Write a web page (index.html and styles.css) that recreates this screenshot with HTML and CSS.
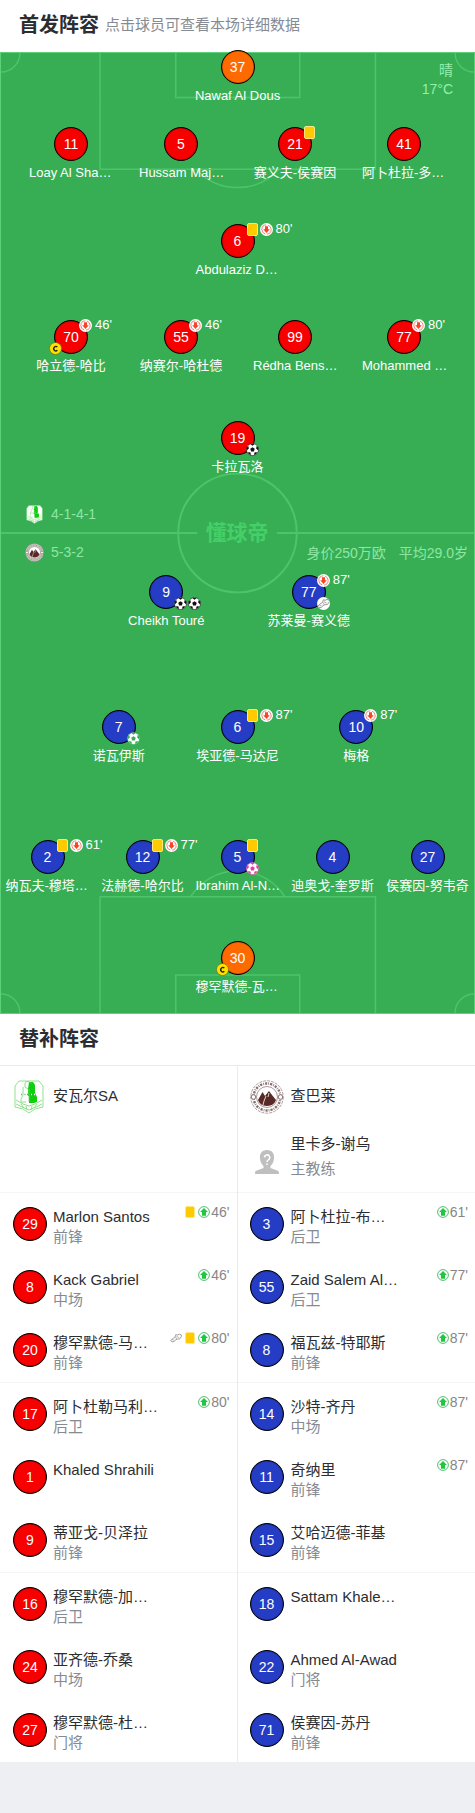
FILE: index.html
```html
<!DOCTYPE html>
<html lang="zh-CN">
<head>
<meta charset="utf-8">
<meta name="viewport" content="width=device-width, initial-scale=1">
<title>首发阵容</title>
<link rel="stylesheet" href="styles.css">
</head>
<body>
<svg class="defs" aria-hidden="true">
  <symbol id="out" viewBox="0 0 14 14">
    <circle cx="7" cy="7" r="7" fill="#fff"/>
    <circle cx="7" cy="7" r="5" fill="none" stroke="#f0564a" stroke-width=".8" stroke-dasharray="13.7 2" stroke-dashoffset="-9"/>
    <path d="M5.4 3.4h3.2v3.4h1.9L7 10.7 3.5 6.8h1.9z" fill="#fb4226"/>
  </symbol>
  <symbol id="in" viewBox="0 0 14 14">
    <circle cx="7" cy="7" r="6.3" fill="#fff" stroke="#2fb554" stroke-width="1"/>
    <path d="M7 2.400 11.600 7H9.400v4.500H4.600V7H2.400z" fill="#1fc741"/>
  </symbol>
  <symbol id="ball" viewBox="0 0 14 14">
    <circle cx="7" cy="7" r="6.5" fill="#fff" stroke="currentColor" stroke-width=".6"/>
    <path fill="currentColor" d="M7 4.6 9.4 6.3 8.5 9.1h-3L4.6 6.3zM4.6 1.1h4.8L7 2.9zM.7 5 2.5 3.2 3.1 5.8.8 8zM13.3 5 11.5 3.2l-.6 2.6L13.2 8zM2.3 9.6l2.5.6.6 2.7-2.6-1.2zM11.7 9.6l-2.5.6-.6 2.7 2.6-1.2z"/>
  </symbol>
  <symbol id="boot" viewBox="0 0 14 14">
    <path d="M.8 10.400 2.500 8.200 6 5.600 6.800 3l2 .5 2-1 2.400.8.300 1.700-2.300 3.200-2.700.1-2.200 1-1.300 1.800-2.800.4z" fill="#f6f6f6" stroke="#8c8c8c" stroke-width=".9" stroke-linejoin="round"/>
    <path d="M6 5.600 8 8.100M7.500 5 10.200 6.500M2.500 8.500l2 1" fill="none" stroke="#8c8c8c" stroke-width=".7"/>
  </symbol>
  <symbol id="cap" viewBox="0 0 14 14">
    <circle cx="7" cy="7" r="6.5" fill="#ffe100" stroke="#6a6420" stroke-width=".7"/>
    <path d="M9 5.5A2.3 2.3 0 1 0 9 8.8" fill="none" stroke="#222" stroke-width="1.5"/>
  </symbol>
  <symbol id="crest-a" viewBox="0 0 34 34">
    <path d="M7 1h20l4 5v21l-8 2-6 4-6-4-8-2V6z" fill="#fff" stroke="#74da74" stroke-width=".8"/>
    <path d="M17 2h4l2 3v8l2 4v5l-3 1h-5v-7h-1V9z" fill="#0fcd0f"/>
    <path d="M13 2.500c2-1.500 5-1 6.500 1M13 3v4l3 2M11 7v8l-2 4v3h5M17 9v13" fill="none" stroke="#6cd86c" stroke-width=".8"/>
    <path d="M4 20l7 4 6 2 6-2 7-4M4 24l6 3 7 3 7-3 6-3M9 24l3 4M25 24l-3 4M14 26l1 4M20 26l-1 4" fill="none" stroke="#7fdd7f" stroke-width=".9"/>
    <path d="M9 14.500h1M12.500 14.500h1M15 14.500h1" stroke="#43c943" stroke-width="1.500"/>
    <path d="M19 14.500h1M22 14.500h1" stroke="#fff" stroke-width="1.500"/>
  </symbol>
  <symbol id="crest-b" viewBox="0 0 34 34">
    <circle cx="17" cy="17" r="16.200" fill="var(--crest, #fff)" stroke="#9a8280" stroke-width=".8" stroke-dasharray="3 1"/>
    <circle cx="17" cy="17" r="13.500" fill="none" stroke="var(--crest-ring, #86706e)" stroke-width="2.400" stroke-dasharray="2.200 1.100 .8 1"/>
    <circle cx="17" cy="17" r="10.500" fill="#fff" stroke="#86706e" stroke-width=".7"/>
    <circle cx="3.500" cy="17" r="2.300" fill="#fff" stroke="#86706e"/>
    <circle cx="30.500" cy="17" r="2.300" fill="#fff" stroke="#86706e"/>
    <path d="M8 20 12.500 12l2.500 4 4-5 3 4 4 5c-1 3-4 6-9 6s-8-3-9-6z" fill="#592a25"/>
    <path d="M16 16l-2 5-1 4M19 13l-1 4" stroke="#fff" stroke-width=".8" fill="none"/>
  </symbol>
</svg>

<header class="section-head">
  <h2>首发阵容</h2><span class="hint">点击球员可查看本场详细数据</span>
</header>

<main>
<section class="pitch" aria-label="首发阵容">
  <svg class="field" viewBox="0 0 475 962" preserveAspectRatio="none" aria-hidden="true">
    <g fill="none" stroke="#4cc56a" stroke-width="1.500">
      <path d="M99.500 0V116.500H376V0M175.500 0V44.500H300V0M196 116.500A56 56 0 0 0 279 116.500"/>
      <path d="M99.500 962V845.500H376V962M175.500 962V924H300V962M190.500 845.500A56 56 0 0 1 285 845.500"/>
      <path d="M19 0A19 19 0 0 1 0 19M456 0A19 19 0 0 0 475 19M0 943A19 19 0 0 1 19 962M475 943A19 19 0 0 0 456 962"/>
    </g>
    <g fill="none" stroke="#4cc56a" stroke-width="2">
      <circle cx="237.500" cy="481" r="59.500"/>
      <path d="M0 481H197M277 481H475"/>
    </g>
    <text class="brand" x="237" y="488" text-anchor="middle">懂球帝</text>
  </svg>
  <div class="weather"><span>晴</span><span>17°C</span></div>

  <div class="squad">
    <div class="line one">
      <a class="player keeper" href="#"><span class="shirt">37</span><span class="name">Nawaf Al Dous</span></a>
    </div>
    <div class="line four">
      <a class="player red" href="#"><span class="shirt">11</span><span class="name cut">Loay Al Sha…</span></a>
      <a class="player red" href="#"><span class="shirt">5</span><span class="name cut">Hussam Maj…</span></a>
      <a class="player red" href="#"><span class="shirt">21<span class="events"><i class="card"></i></span></span><span class="name">赛义夫-侯赛因</span></a>
      <a class="player red" href="#"><span class="shirt">41</span><span class="name cut">阿卜杜拉-多…</span></a>
    </div>
    <div class="line one">
      <a class="player red" href="#"><span class="shirt">6<span class="events"><i class="card"></i><svg><use href="#out"/></svg><span class="time">80'</span></span></span><span class="name cut">Abdulaziz D…</span></a>
    </div>
    <div class="line four">
      <a class="player red" href="#"><span class="shirt">70<span class="events"><svg><use href="#out"/></svg><span class="time">46'</span></span><span class="captain"><svg><use href="#cap"/></svg></span></span><span class="name">哈立德-哈比</span></a>
      <a class="player red" href="#"><span class="shirt">55<span class="events"><svg><use href="#out"/></svg><span class="time">46'</span></span></span><span class="name">纳赛尔-哈杜德</span></a>
      <a class="player red" href="#"><span class="shirt">99</span><span class="name cut">Rédha Bens…</span></a>
      <a class="player red" href="#"><span class="shirt">77<span class="events"><svg><use href="#out"/></svg><span class="time">80'</span></span></span><span class="name cut">Mohammed …</span></a>
    </div>
    <div class="line one">
      <a class="player red" href="#"><span class="shirt">19<span class="goals"><svg><use href="#ball"/></svg></span></span><span class="name">卡拉瓦洛</span></a>
    </div>

    <div class="formation"><svg><use href="#crest-a"/></svg><span>4-1-4-1</span></div>
    <div class="formation dim"><svg><use href="#crest-b"/></svg><span>5-3-2</span><span class="worth"><span>身价250万欧</span><span>平均29.0岁</span></span></div>

    <div class="line two">
      <a class="player blue" href="#"><span class="shirt">9<span class="goals"><svg><use href="#ball"/></svg><svg><use href="#ball"/></svg></span></span><span class="name">Cheikh Touré</span></a>
      <a class="player blue" href="#"><span class="shirt">77<span class="events"><svg><use href="#out"/></svg><span class="time">87'</span></span><span class="goals"><svg class="disc"><use href="#boot"/></svg></span></span><span class="name">苏莱曼-赛义德</span></a>
    </div>
    <div class="line three">
      <a class="player blue" href="#"><span class="shirt">7<span class="goals"><svg class="green"><use href="#ball"/></svg></span></span><span class="name">诺瓦伊斯</span></a>
      <a class="player blue" href="#"><span class="shirt">6<span class="events"><i class="card"></i><svg><use href="#out"/></svg><span class="time">87'</span></span></span><span class="name">埃亚德-马达尼</span></a>
      <a class="player blue" href="#"><span class="shirt">10<span class="events"><svg><use href="#out"/></svg><span class="time">87'</span></span></span><span class="name">梅格</span></a>
    </div>
    <div class="line five">
      <a class="player blue" href="#"><span class="shirt">2<span class="events"><i class="card"></i><svg><use href="#out"/></svg><span class="time">61'</span></span></span><span class="name cut">纳瓦夫-穆塔…</span></a>
      <a class="player blue" href="#"><span class="shirt">12<span class="events"><i class="card"></i><svg><use href="#out"/></svg><span class="time">77'</span></span></span><span class="name">法赫德-哈尔比</span></a>
      <a class="player blue" href="#"><span class="shirt">5<span class="events"><i class="card"></i></span><span class="goals"><svg class="pink"><use href="#ball"/></svg></span></span><span class="name cut">Ibrahim Al-N…</span></a>
      <a class="player blue" href="#"><span class="shirt">4</span><span class="name">迪奥戈-奎罗斯</span></a>
      <a class="player blue" href="#"><span class="shirt">27</span><span class="name">侯赛因-努韦奇</span></a>
    </div>
    <div class="line one">
      <a class="player keeper" href="#"><span class="shirt">30<span class="captain"><svg><use href="#cap"/></svg></span></span><span class="name cut">穆罕默德-瓦…</span></a>
    </div>
  </div>
</section>

<section class="bench">
  <header class="section-head"><h2>替补阵容</h2></header>
  <div class="teams">
    <div class="team">
      <div class="team-head">
        <div class="club"><svg><use href="#crest-a"/></svg><span>安瓦尔SA</span></div>
      </div>
      <div class="group">
        <a class="sub red" href="#"><span class="shirt">29</span><span class="who"><b>Marlon Santos</b><small>前锋</small></span><span class="log"><i class="card"></i><svg><use href="#in"/></svg>46'</span></a>
        <a class="sub red" href="#"><span class="shirt">8</span><span class="who"><b>Kack Gabriel</b><small>中场</small></span><span class="log"><svg><use href="#in"/></svg>46'</span></a>
        <a class="sub red" href="#"><span class="shirt">20</span><span class="who"><b>穆罕默德-马…</b><small>前锋</small></span><span class="log"><svg><use href="#boot"/></svg><i class="card"></i><svg><use href="#in"/></svg>80'</span></a>
      </div>
      <div class="group">
        <a class="sub red" href="#"><span class="shirt">17</span><span class="who"><b>阿卜杜勒马利…</b><small>后卫</small></span><span class="log"><svg><use href="#in"/></svg>80'</span></a>
        <a class="sub red" href="#"><span class="shirt">1</span><span class="who"><b>Khaled Shrahili</b></span></a>
        <a class="sub red" href="#"><span class="shirt">9</span><span class="who"><b>蒂亚戈-贝泽拉</b><small>前锋</small></span></a>
      </div>
      <div class="group">
        <a class="sub red" href="#"><span class="shirt">16</span><span class="who"><b>穆罕默德-加…</b><small>后卫</small></span></a>
        <a class="sub red" href="#"><span class="shirt">24</span><span class="who"><b>亚齐德-乔桑</b><small>中场</small></span></a>
        <a class="sub red" href="#"><span class="shirt">27</span><span class="who"><b>穆罕默德-杜…</b><small>门将</small></span></a>
      </div>
    </div>
    <div class="team">
      <div class="team-head">
        <div class="club"><svg><use href="#crest-b"/></svg><span>查巴莱</span></div>
        <div class="coach">
          <svg viewBox="0 0 34 34" aria-hidden="true"><path d="M17 5c5 0 7.500 3.500 7 8.500-.4 4-2 6-3.500 7.500v2l8 3q.500 1.500.5 3H5q0-1.500.5-3l8-3v-2C12 19.500 10.400 17.500 10 13.500 9.500 8.500 12 5 17 5z" fill="#bfbfbf"/><path d="M14.500 12.500a2.600 2.600 0 1 1 3.800 2.300q-1.300.7-1.300 2.200M17 18.500v1.500" fill="none" stroke="#fff" stroke-width="1.500"/></svg>
          <div class="who"><b>里卡多-谢乌</b><small>主教练</small></div>
        </div>
      </div>
      <div class="group">
        <a class="sub blue" href="#"><span class="shirt">3</span><span class="who"><b>阿卜杜拉-布…</b><small>后卫</small></span><span class="log"><svg><use href="#in"/></svg>61'</span></a>
        <a class="sub blue" href="#"><span class="shirt">55</span><span class="who"><b>Zaid Salem Al…</b><small>后卫</small></span><span class="log"><svg><use href="#in"/></svg>77'</span></a>
        <a class="sub blue" href="#"><span class="shirt">8</span><span class="who"><b>福瓦兹-特耶斯</b><small>前锋</small></span><span class="log"><svg><use href="#in"/></svg>87'</span></a>
      </div>
      <div class="group">
        <a class="sub blue" href="#"><span class="shirt">14</span><span class="who"><b>沙特-齐丹</b><small>中场</small></span><span class="log"><svg><use href="#in"/></svg>87'</span></a>
        <a class="sub blue" href="#"><span class="shirt">11</span><span class="who"><b>奇纳里</b><small>前锋</small></span><span class="log"><svg><use href="#in"/></svg>87'</span></a>
        <a class="sub blue" href="#"><span class="shirt">15</span><span class="who"><b>艾哈迈德-菲基</b><small>前锋</small></span></a>
      </div>
      <div class="group">
        <a class="sub blue" href="#"><span class="shirt">18</span><span class="who"><b>Sattam Khale…</b></span></a>
        <a class="sub blue" href="#"><span class="shirt">22</span><span class="who"><b>Ahmed Al-Awad</b><small>门将</small></span></a>
        <a class="sub blue" href="#"><span class="shirt">71</span><span class="who"><b>侯赛因-苏丹</b><small>前锋</small></span></a>
      </div>
    </div>
  </div>
</section>
</main>
</body>
</html>
```

FILE: styles.css
```css
* {
  box-sizing: border-box;
}

body {
  margin: 0;
  background: #eeeff2;
  color: #2c2d30;
  font-family: "Liberation Sans", "Noto Sans CJK SC", sans-serif;
  font-size: 14px;
}

a {
  color: inherit;
  text-decoration: none;
}

svg {
  display: block;
  flex: none;
}

.defs {
  position: absolute;
  width: 0;
  height: 0;
}

.section-head {
  display: flex;
  align-items: center;
  gap: 6px;
  height: 52px;
  padding: 0 19px 2px;
  background: #fff;
}

.section-head h2 {
  margin: 0;
  font-size: 20px;
  line-height: 30px;
}

.hint {
  color: #868b93;
  font-size: 15px;
  line-height: 22px;
}

/* Pitch */

.pitch {
  position: relative;
  background: #37ae54;
}

.field {
  position: absolute;
  inset: 0;
  width: 100%;
  height: 100%;
  border: 1px solid #5bd27a;
}

.brand {
  fill: #44cf69;
  font-family: "Noto Sans CJK SC", sans-serif;
  font-size: 21px;
  font-weight: bold;
}

.weather {
  position: absolute;
  top: 9px;
  right: 22px;
  display: grid;
  color: #96eeab;
  line-height: 19px;
  text-align: right;
}

.squad {
  position: relative;
  display: grid;
  grid-template-rows: 75px 97px 96px 101px 74px 38px 38px 139px 130px 101px 73px;
}

.line {
  display: grid;
  justify-content: center;
  align-items: start;
}

.one {
  grid-template-columns: 100%;
}

.one:first-child {
  margin-top: -2px;
}

.two {
  grid-template-columns: 30% 30%;
  padding-top: 4px;
}

.three {
  grid-template-columns: repeat(3, 25%);
}

.four {
  grid-template-columns: 110fr 110fr 118fr 100fr;
  padding: 0 21px 0 16px;
}

.five {
  grid-template-columns: repeat(5, 20%);
}

.player {
  display: flex;
  flex-direction: column;
  align-items: center;
  gap: 2px;
  color: #fff;
}

.shirt {
  position: relative;
  display: flex;
  flex: none;
  align-items: center;
  justify-content: center;
  width: 34px;
  height: 34px;
  border: 1px solid #000;
  border-radius: 50%;
  box-shadow: inset 0 0 1px #000;
  color: #fff;
  font-size: 14px;
}

.red .shirt {
  background: #f60000;
}

.blue .shirt {
  background: #253dc4;
}

.keeper .shirt {
  background: #ff6a00;
}

.name {
  display: flex;
  justify-content: center;
  width: 84px;
  font-size: 13px;
  line-height: 20px;
  white-space: nowrap;
}

.cut {
  justify-content: start;
}

.events,
.goals,
.captain {
  position: absolute;
  left: 24px;
  display: flex;
  gap: 1px;
}

.events {
  top: -2px;
}

.goals,
.captain {
  top: 21px;
}

.captain {
  left: -6px;
}

.shirt svg {
  width: 13px;
  height: 13px;
  color: #111;
}

.shirt .green {
  color: #37ae54;
}

.shirt .pink {
  color: #e83aa5;
}

.shirt .disc {
  border-radius: 50%;
  background: #fff;
}

.card {
  flex: none;
  width: 11px;
  height: 13px;
  margin: 0 1px;
  border: 1px solid #ffe680;
  border-radius: 2px;
  background: #ffcb00;
}

.time {
  margin-left: 2px;
  font-size: 13px;
  line-height: 12px;
}

.formation {
  display: flex;
  align-items: center;
  gap: 7px;
  padding: 0 7px 0 25px;
  color: #8ee6a5;
}

.formation svg {
  width: 19px;
  height: 19px;
}

.dim {
  --crest: #c9c9c2;
  --crest-ring: #a5a39c;
}

.worth {
  display: flex;
  gap: 13px;
  margin-left: auto;
}

/* Bench */

.bench {
  background: #fff;
}

.bench .section-head {
  height: 51px;
}

.teams {
  display: grid;
  grid-template-columns: 1fr 1fr;
  border-top: 1px solid #e9eaec;
}

.team:first-child {
  border-right: 1px solid #e9eaec;
}

.team-head {
  height: 126px;
  padding: 14px 12px;
}

.club,
.coach {
  display: flex;
  align-items: center;
  gap: 7px;
  font-size: 15px;
  line-height: 22px;
}

.club svg,
.coach svg {
  width: 34px;
  height: 34px;
}

.club span {
  padding-bottom: 2px;
}

.coach {
  margin-top: 20px;
  align-items: end;
}

.coach .who {
  gap: 5px;
}

.group {
  border-top: 1px solid #f4f5f6;
}

.sub {
  display: flex;
  gap: 6px;
  height: 63px;
  padding: 14px 7px 0 13px;
}

.team + .team .sub {
  gap: 7px;
  padding-left: 12px;
}

.who {
  display: flex;
  flex-direction: column;
  flex: 1;
}

.who b,
.who small {
  font-size: 15px;
  font-weight: normal;
  line-height: 20px;
  white-space: nowrap;
}

.who small {
  color: #868b93;
}

.log {
  display: flex;
  align-items: center;
  gap: 1px;
  height: 14px;
  margin-top: -2px;
  color: #868686;
  font-size: 14px;
}

.log svg {
  width: 12px;
  height: 12px;
}

.log .card {
  width: 10px;
  height: 12px;
  margin: 0 2px;
}
```
